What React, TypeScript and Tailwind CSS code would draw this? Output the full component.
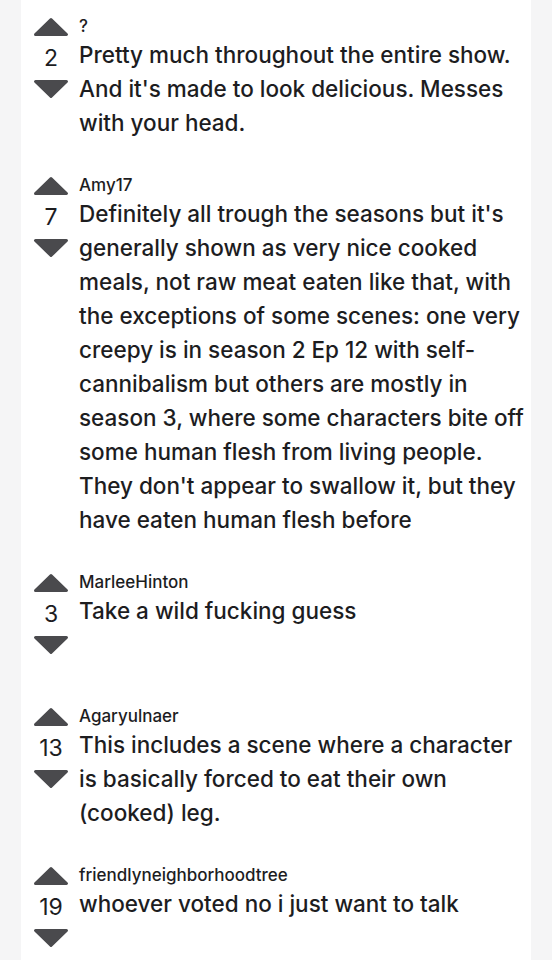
const comments = [
  {
    user: "?",
    score: 2,
    text: "Pretty much throughout the entire show. And it's made to look delicious. Messes with your head.",
  },
  {
    user: "Amy17",
    score: 7,
    text: "Definitely all trough the seasons but it's generally shown as very nice cooked meals, not raw meat eaten like that, with the exceptions of some scenes: one very creepy is in season 2 Ep 12 with self-cannibalism but others are mostly in season 3, where some characters bite off some human flesh from living people. They don't appear to swallow it, but they have eaten human flesh before",
  },
  { user: "MarleeHinton", score: 3, text: "Take a wild fucking guess" },
  {
    user: "Agaryulnaer",
    score: 13,
    text: "This includes a scene where a character is basically forced to eat their own (cooked) leg.",
  },
  { user: "friendlyneighborhoodtree", score: 19, text: "whoever voted no i just want to talk" },
];

function Arrow({ down }: { down?: boolean }) {
  return (
    <svg width="36" height="20" viewBox="0 0 36 20" className={down ? "rotate-180" : ""}>
      <path
        d="M18 2.5 L33.5 17.5 L2.5 17.5 Z"
        fill="#4a4a4d"
        stroke="#4a4a4d"
        strokeWidth="3"
        strokeLinejoin="round"
      />
    </svg>
  );
}

function Comment({ user, score, text }: { user: string; score: number; text: string }) {
  return (
    <div className="flex items-start gap-[10px] pb-[36px]">
      <div className="flex w-[36px] shrink-0 flex-col items-center pb-[16px]">
        <Arrow />
        <div className="flex h-[42px] items-center text-[23px] leading-none text-[#1d1d1f]">
          {score}
        </div>
        <Arrow down />
      </div>
      <div className="w-[450px] min-w-0">
        <div className="h-[21px] text-[17px] font-medium leading-[19px] text-[#1d1d1f]">{user}</div>
        <p className="text-[22.5px] font-medium leading-[34px] text-[#1d1d1f]">{text}</p>
      </div>
    </div>
  );
}

export default function App() {
  return (
    <div
      className="min-h-[960px] bg-[#f5f5f6] pl-[21px] pr-[21px]"
      style={{ fontFamily: "Inter, 'Noto Sans', sans-serif" }}
    >
      <div className="min-h-[960px] bg-white pl-[12px] pt-[17px]">
        {comments.map((c) => (
          <Comment key={c.user} {...c} />
        ))}
      </div>
    </div>
  );
}
